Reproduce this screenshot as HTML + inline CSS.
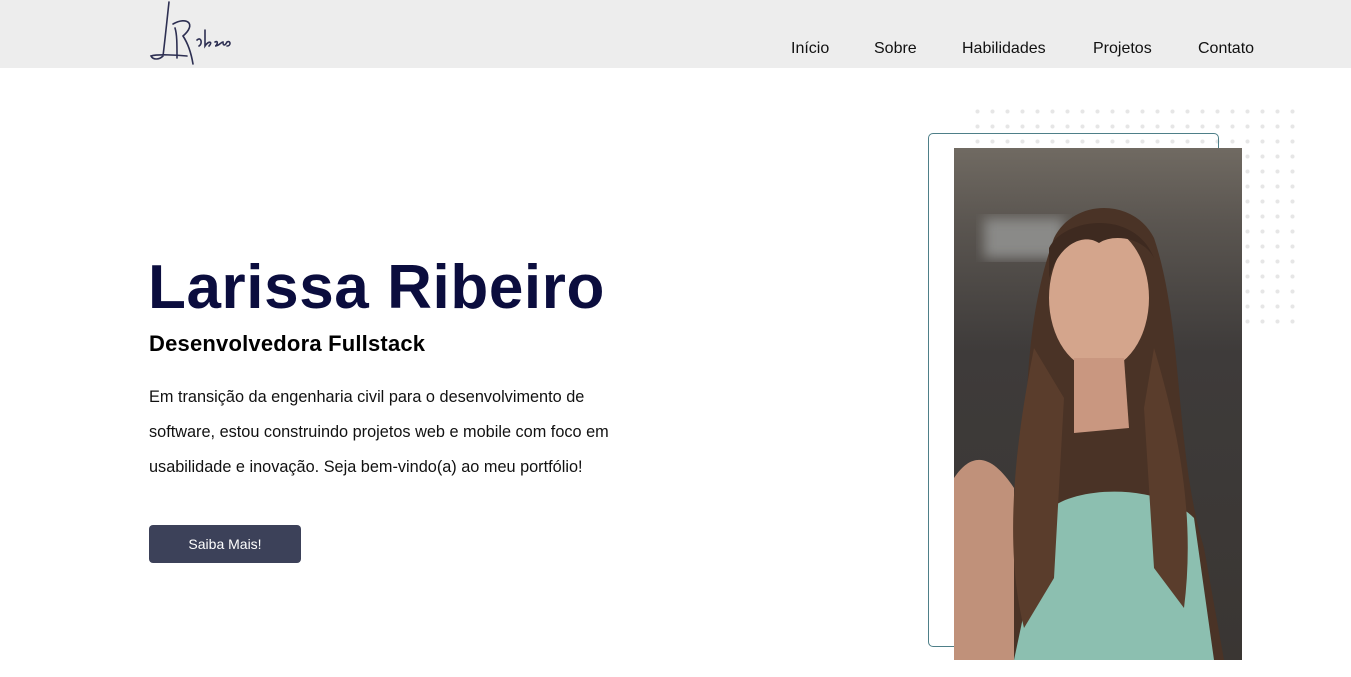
<!DOCTYPE html>
<html><head><meta charset="utf-8"><style>
*{margin:0;padding:0;box-sizing:border-box}
body{width:1351px;height:677px;background:#fff;font-family:"Liberation Sans",sans-serif;position:relative;overflow:hidden}
header{position:absolute;left:0;top:0;width:1351px;height:68px;background:#ededed}
nav a{position:absolute;top:40px;font-size:16px;color:#111;text-decoration:none}
h1{position:absolute;left:148px;top:252px;font-size:62px;font-weight:bold;color:#0b0d3e;letter-spacing:0.6px}
h2{position:absolute;left:149px;top:331px;font-size:22px;font-weight:bold;color:#000;letter-spacing:0.2px}
p{position:absolute;left:149px;top:380px;width:520px;font-size:16.3px;line-height:35px;color:#111}
.btn{position:absolute;left:149px;top:525px;width:152px;height:38px;background:#3c4159;border-radius:4px;color:#fff;font-size:14px;text-align:center;line-height:38px}
.dots{position:absolute;left:970px;top:104px;width:330px;height:222px;background-image:radial-gradient(circle,#e6e6e6 1.8px,transparent 2.3px);background-size:15px 15px}
.frame{position:absolute;left:928px;top:133px;width:291px;height:514px;border:1.5px solid #4e7f88;border-radius:5px}
.photo{position:absolute;left:954px;top:148px;width:288px;height:512px;overflow:hidden;background:linear-gradient(180deg,#706a62 0%,#5a5550 15%,#3e3b3a 40%,#3a3633 100%)}
</style></head><body>
<header>
<svg style="position:absolute;left:147px;top:0" width="90" height="68" viewBox="0 0 90 68"><g fill="none" stroke="#2d2f52" stroke-width="1.6" stroke-linecap="round"><path d="M22 2 C20 20 18 40 16 56 C12 60 6 60 4 56 C10 54 30 55 40 56"/><path d="M28 28 C30 34 30 44 30 58 M26 24 C40 16 50 24 36 36 C40 42 44 52 46 64"/><path d="M50 40 C54 36 56 44 52 46 M58 30 L58 46 C62 40 66 42 62 46 M68 42 C72 40 70 46 68 46 C72 46 74 42 76 42 C76 46 78 46 80 42 C84 40 84 46 80 46"/></g></svg>
<nav><a style="left:791px">Início</a><a style="left:874px">Sobre</a><a style="left:962px">Habilidades</a><a style="left:1093px">Projetos</a><a style="left:1198px">Contato</a></nav>
</header>
<h1>Larissa Ribeiro</h1>
<h2>Desenvolvedora Fullstack</h2>
<p>Em transição da engenharia civil para o desenvolvimento de<br>software, estou construindo projetos web e mobile com foco em<br>usabilidade e inovação. Seja bem-vindo(a) ao meu portfólio!</p>
<div class="btn">Saiba Mais!</div>
<div class="dots"></div>
<div class="frame"></div>
<div class="photo">
<svg width="288" height="512" viewBox="0 0 288 512">
<defs><filter id="b"><feGaussianBlur stdDeviation="6"/></filter></defs>
<rect x="30" y="70" width="80" height="40" fill="#8a8a88" filter="url(#b)"/>
<path d="M30 512 L60 380 C80 320 60 200 100 90 C120 50 180 50 200 90 C230 180 220 300 250 400 L270 512Z" fill="#4a3326"/>
<path d="M0 330 C20 300 40 310 60 340 L60 512 L0 512Z" fill="#c0917a"/>
<path d="M90 370 C100 340 200 330 240 370 L260 512 L60 512Z" fill="#8cbfb0"/>
<ellipse cx="145" cy="150" rx="50" ry="72" fill="#d4a58c"/>
<path d="M120 210 L170 210 L175 280 L120 285Z" fill="#c99780"/>
<path d="M95 100 C110 70 180 60 200 110 C190 90 160 85 145 95 C130 85 105 95 95 130Z" fill="#3e2a20"/>
<path d="M80 200 C60 300 50 400 70 480 L100 430 L110 250Z M200 200 C230 300 240 380 230 460 L200 420 L190 260Z" fill="#5a3d2c"/>
</svg>
</div>
</body></html>
